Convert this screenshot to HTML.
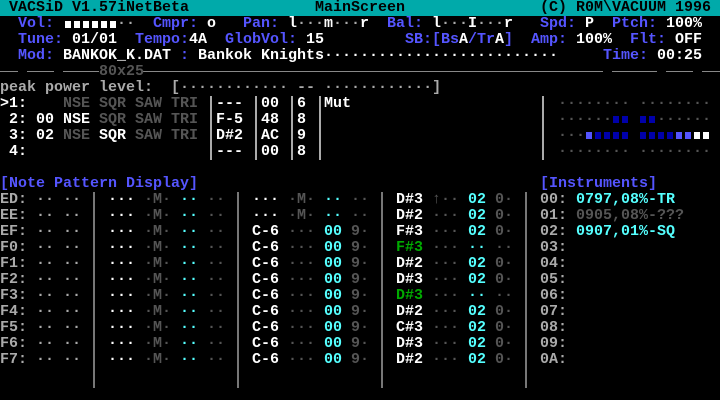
<!DOCTYPE html>
<html><head><meta charset="utf-8"><style>
html,body{margin:0;padding:0;background:#000;}
#s{position:relative;width:720px;height:400px;overflow:hidden;background:#000;font-family:"Liberation Mono",monospace;font-size:15px;font-weight:bold;line-height:16px;}
#s span{position:absolute;white-space:pre;height:16px;}
.B{color:#5555ff}.W{color:#fff}.G{color:#aaa}.D{color:#555}.C{color:#55ffff}.K{color:#000}.N{color:#00aa00}
.v{position:absolute;width:2px}
.h{position:absolute;height:1px;top:71px;background:#888}
.q{position:absolute;width:6px;height:7px}
</style></head><body><div id="s">
<div style="position:absolute;left:0;top:0;width:720px;height:16px;background:#00aaaa"></div>
<span class="K" style="left:9px;top:0">VACSiD V1.57iNetBeta</span>
<span class="K" style="left:315px;top:0">MainScreen</span>
<span class="K" style="left:540px;top:0">(C) R0M\VACUUM 1996</span>

<span class="B" style="left:18px;top:16px">Vol:</span>
<div class="q" style="left:65px;top:21px;background:#fff"></div><div class="q" style="left:74px;top:21px;background:#fff"></div><div class="q" style="left:83px;top:21px;background:#fff"></div><div class="q" style="left:92px;top:21px;background:#fff"></div><div class="q" style="left:101px;top:21px;background:#fff"></div><div class="q" style="left:110px;top:21px;background:#fff"></div>
<span class="G" style="left:117px;top:16px">··</span>
<span class="B" style="left:153px;top:16px">Cmpr:</span><span class="W" style="left:207px;top:16px">o</span>
<span class="B" style="left:243px;top:16px">Pan:</span><span class="W" style="left:288px;top:16px">l</span><span class="G" style="left:297px;top:16px">···</span><span class="W" style="left:324px;top:16px">m</span><span class="G" style="left:333px;top:16px">···</span><span class="W" style="left:360px;top:16px">r</span>
<span class="B" style="left:387px;top:16px">Bal:</span><span class="W" style="left:432px;top:16px">l</span><span class="G" style="left:441px;top:16px">···</span><span class="W" style="left:468px;top:16px">I</span><span class="G" style="left:477px;top:16px">···</span><span class="W" style="left:504px;top:16px">r</span>
<span class="B" style="left:540px;top:16px">Spd:</span><span class="W" style="left:585px;top:16px">P</span>
<span class="B" style="left:612px;top:16px">Ptch:</span><span class="W" style="left:666px;top:16px">100%</span>

<span class="B" style="left:18px;top:32px">Tune:</span><span class="W" style="left:72px;top:32px">01/01</span>
<span class="B" style="left:135px;top:32px">Tempo:</span><span class="W" style="left:189px;top:32px">4A</span>
<span class="B" style="left:225px;top:32px">GlobVol:</span><span class="W" style="left:306px;top:32px">15</span>
<span class="B" style="left:405px;top:32px">SB:[Bs</span><span class="W" style="left:459px;top:32px">A</span><span class="B" style="left:468px;top:32px">/Tr</span><span class="W" style="left:495px;top:32px">A</span><span class="B" style="left:504px;top:32px">]</span>
<span class="B" style="left:531px;top:32px">Amp:</span><span class="W" style="left:576px;top:32px">100%</span>
<span class="B" style="left:630px;top:32px">Flt:</span><span class="W" style="left:675px;top:32px">OFF</span>

<span class="B" style="left:18px;top:48px">Mod:</span><span class="W" style="left:63px;top:48px">BANKOK_K.DAT</span><span class="B" style="left:180px;top:48px">:</span><span class="W" style="left:198px;top:48px">Bankok Knights··························</span>
<span class="B" style="left:603px;top:48px">Time:</span><span class="W" style="left:657px;top:48px">00:25</span>

<div class="h" style="left:0;width:18px"></div><div class="h" style="left:27px;width:27px"></div><div class="h" style="left:63px;width:36px"></div><div class="h" style="left:143px;width:460px"></div><div class="h" style="left:612px;width:45px"></div><div class="h" style="left:666px;width:27px"></div><div class="h" style="left:702px;width:18px"></div>
<span class="D" style="left:99px;top:64px">80x25</span>

<span class="G" style="left:0;top:80px">peak power level:  [············ -- ············]</span>

<span class="W" style="left:0;top:96px">&gt;1:</span><span class="D" style="left:63px;top:96px">NSE SQR SAW TRI</span><span class="W" style="left:216px;top:96px">---</span><span class="W" style="left:261px;top:96px">00</span><span class="W" style="left:297px;top:96px">6</span><span class="W" style="left:324px;top:96px">Mut</span>
<span class="W" style="left:9px;top:112px">2: 00 NSE</span><span class="D" style="left:99px;top:112px">SQR SAW TRI</span><span class="W" style="left:216px;top:112px">F-5</span><span class="W" style="left:261px;top:112px">48</span><span class="W" style="left:297px;top:112px">8</span>
<span class="W" style="left:9px;top:128px">3: 02</span><span class="D" style="left:63px;top:128px">NSE</span><span class="W" style="left:99px;top:128px">SQR</span><span class="D" style="left:135px;top:128px">SAW TRI</span><span class="W" style="left:216px;top:128px">D#2</span><span class="W" style="left:261px;top:128px">AC</span><span class="W" style="left:297px;top:128px">9</span>
<span class="W" style="left:9px;top:144px">4:</span><span class="W" style="left:216px;top:144px">---</span><span class="W" style="left:261px;top:144px">00</span><span class="W" style="left:297px;top:144px">8</span>
<div class="v" style="left:210px;top:96px;height:64px;background:#aaa"></div>
<div class="v" style="left:255px;top:96px;height:64px;background:#aaa"></div>
<div class="v" style="left:291px;top:96px;height:64px;background:#aaa"></div>
<div class="v" style="left:319px;top:96px;height:64px;background:#aaa"></div>
<div class="v" style="left:542px;top:96px;height:64px;background:#aaa"></div>

<span class="D" style="left:558px;top:96px">········ ········</span>
<span class="D" style="left:558px;top:112px">········ ········</span>
<span class="D" style="left:558px;top:128px">········ ········</span>
<span class="D" style="left:558px;top:144px">········ ········</span>
<div style="position:absolute;left:610px;top:114px;width:20px;height:12px;background:#000"></div>
<div style="position:absolute;left:637px;top:114px;width:20px;height:12px;background:#000"></div>
<div style="position:absolute;left:583px;top:130px;width:47px;height:12px;background:#000"></div>
<div style="position:absolute;left:637px;top:130px;width:83px;height:12px;background:#000"></div>
<div class="q" style="left:613px;top:116px;background:#0000aa"></div><div class="q" style="left:622px;top:116px;background:#0000aa"></div><div class="q" style="left:640px;top:116px;background:#0000aa"></div><div class="q" style="left:649px;top:116px;background:#0000aa"></div>
<div class="q" style="left:586px;top:132px;background:#5555ff"></div><div class="q" style="left:595px;top:132px;background:#0000aa"></div><div class="q" style="left:604px;top:132px;background:#0000aa"></div><div class="q" style="left:613px;top:132px;background:#0000aa"></div><div class="q" style="left:622px;top:132px;background:#0000aa"></div>
<div class="q" style="left:640px;top:132px;background:#0000aa"></div><div class="q" style="left:649px;top:132px;background:#0000aa"></div><div class="q" style="left:658px;top:132px;background:#0000aa"></div><div class="q" style="left:667px;top:132px;background:#0000aa"></div><div class="q" style="left:676px;top:132px;background:#5555ff"></div><div class="q" style="left:685px;top:132px;background:#5555ff"></div><div class="q" style="left:694px;top:132px;background:#fff"></div><div class="q" style="left:703px;top:132px;background:#fff"></div>

<span class="B" style="left:0;top:176px">[Note Pattern Display]</span>
<span class="B" style="left:540px;top:176px">[Instruments]</span>

<div class="v" style="left:93px;top:192px;height:196px;background:#777"></div>
<div class="v" style="left:237px;top:192px;height:196px;background:#777"></div>
<div class="v" style="left:381px;top:192px;height:196px;background:#777"></div>
<div class="v" style="left:525px;top:192px;height:196px;background:#777"></div>

<!-- rows -->
<span class="G" style="left:0;top:192px">ED:</span><span class="G" style="left:36px;top:192px">·· ··</span><span class="W" style="left:108px;top:192px">···</span><span class="D" style="left:144px;top:192px">·M·</span><span class="C" style="left:180px;top:192px">··</span><span class="D" style="left:207px;top:192px">··</span><span class="W" style="left:252px;top:192px">···</span><span class="D" style="left:288px;top:192px">·M·</span><span class="C" style="left:324px;top:192px">··</span><span class="D" style="left:351px;top:192px">··</span><span class="W" style="left:396px;top:192px">D#3</span><span class="D" style="left:432px;top:192px">↑··</span><span class="C" style="left:468px;top:192px">02</span><span class="D" style="left:495px;top:192px">0·</span><span class="G" style="left:540px;top:192px">00:</span><span class="C" style="left:576px;top:192px">0797,08%-TR</span>
<span class="G" style="left:0;top:208px">EE:</span><span class="G" style="left:36px;top:208px">·· ··</span><span class="W" style="left:108px;top:208px">···</span><span class="D" style="left:144px;top:208px">·M·</span><span class="C" style="left:180px;top:208px">··</span><span class="D" style="left:207px;top:208px">··</span><span class="W" style="left:252px;top:208px">···</span><span class="D" style="left:288px;top:208px">·M·</span><span class="C" style="left:324px;top:208px">··</span><span class="D" style="left:351px;top:208px">··</span><span class="W" style="left:396px;top:208px">D#2</span><span class="D" style="left:432px;top:208px">···</span><span class="C" style="left:468px;top:208px">02</span><span class="D" style="left:495px;top:208px">0·</span><span class="G" style="left:540px;top:208px">01:</span><span class="D" style="left:576px;top:208px">0905,08%-???</span>
<span class="G" style="left:0;top:224px">EF:</span><span class="G" style="left:36px;top:224px">·· ··</span><span class="W" style="left:108px;top:224px">···</span><span class="D" style="left:144px;top:224px">·M·</span><span class="C" style="left:180px;top:224px">··</span><span class="D" style="left:207px;top:224px">··</span><span class="W" style="left:252px;top:224px">C-6</span><span class="D" style="left:288px;top:224px">···</span><span class="C" style="left:324px;top:224px">00</span><span class="D" style="left:351px;top:224px">9·</span><span class="W" style="left:396px;top:224px">F#3</span><span class="D" style="left:432px;top:224px">···</span><span class="C" style="left:468px;top:224px">02</span><span class="D" style="left:495px;top:224px">0·</span><span class="G" style="left:540px;top:224px">02:</span><span class="C" style="left:576px;top:224px">0907,01%-SQ</span>
<span class="G" style="left:0;top:240px">F0:</span><span class="G" style="left:36px;top:240px">·· ··</span><span class="W" style="left:108px;top:240px">···</span><span class="D" style="left:144px;top:240px">·M·</span><span class="C" style="left:180px;top:240px">··</span><span class="D" style="left:207px;top:240px">··</span><span class="W" style="left:252px;top:240px">C-6</span><span class="D" style="left:288px;top:240px">···</span><span class="C" style="left:324px;top:240px">00</span><span class="D" style="left:351px;top:240px">9·</span><span class="N" style="left:396px;top:240px">F#3</span><span class="D" style="left:432px;top:240px">···</span><span class="C" style="left:468px;top:240px">··</span><span class="D" style="left:495px;top:240px">··</span><span class="G" style="left:540px;top:240px">03:</span>
<span class="G" style="left:0;top:256px">F1:</span><span class="G" style="left:36px;top:256px">·· ··</span><span class="W" style="left:108px;top:256px">···</span><span class="D" style="left:144px;top:256px">·M·</span><span class="C" style="left:180px;top:256px">··</span><span class="D" style="left:207px;top:256px">··</span><span class="W" style="left:252px;top:256px">C-6</span><span class="D" style="left:288px;top:256px">···</span><span class="C" style="left:324px;top:256px">00</span><span class="D" style="left:351px;top:256px">9·</span><span class="W" style="left:396px;top:256px">D#2</span><span class="D" style="left:432px;top:256px">···</span><span class="C" style="left:468px;top:256px">02</span><span class="D" style="left:495px;top:256px">0·</span><span class="G" style="left:540px;top:256px">04:</span>
<span class="G" style="left:0;top:272px">F2:</span><span class="G" style="left:36px;top:272px">·· ··</span><span class="W" style="left:108px;top:272px">···</span><span class="D" style="left:144px;top:272px">·M·</span><span class="C" style="left:180px;top:272px">··</span><span class="D" style="left:207px;top:272px">··</span><span class="W" style="left:252px;top:272px">C-6</span><span class="D" style="left:288px;top:272px">···</span><span class="C" style="left:324px;top:272px">00</span><span class="D" style="left:351px;top:272px">9·</span><span class="W" style="left:396px;top:272px">D#3</span><span class="D" style="left:432px;top:272px">···</span><span class="C" style="left:468px;top:272px">02</span><span class="D" style="left:495px;top:272px">0·</span><span class="G" style="left:540px;top:272px">05:</span>
<span class="G" style="left:0;top:288px">F3:</span><span class="G" style="left:36px;top:288px">·· ··</span><span class="W" style="left:108px;top:288px">···</span><span class="D" style="left:144px;top:288px">·M·</span><span class="C" style="left:180px;top:288px">··</span><span class="D" style="left:207px;top:288px">··</span><span class="W" style="left:252px;top:288px">C-6</span><span class="D" style="left:288px;top:288px">···</span><span class="C" style="left:324px;top:288px">00</span><span class="D" style="left:351px;top:288px">9·</span><span class="N" style="left:396px;top:288px">D#3</span><span class="D" style="left:432px;top:288px">···</span><span class="C" style="left:468px;top:288px">··</span><span class="D" style="left:495px;top:288px">··</span><span class="G" style="left:540px;top:288px">06:</span>
<span class="G" style="left:0;top:304px">F4:</span><span class="G" style="left:36px;top:304px">·· ··</span><span class="W" style="left:108px;top:304px">···</span><span class="D" style="left:144px;top:304px">·M·</span><span class="C" style="left:180px;top:304px">··</span><span class="D" style="left:207px;top:304px">··</span><span class="W" style="left:252px;top:304px">C-6</span><span class="D" style="left:288px;top:304px">···</span><span class="C" style="left:324px;top:304px">00</span><span class="D" style="left:351px;top:304px">9·</span><span class="W" style="left:396px;top:304px">D#2</span><span class="D" style="left:432px;top:304px">···</span><span class="C" style="left:468px;top:304px">02</span><span class="D" style="left:495px;top:304px">0·</span><span class="G" style="left:540px;top:304px">07:</span>
<span class="G" style="left:0;top:320px">F5:</span><span class="G" style="left:36px;top:320px">·· ··</span><span class="W" style="left:108px;top:320px">···</span><span class="D" style="left:144px;top:320px">·M·</span><span class="C" style="left:180px;top:320px">··</span><span class="D" style="left:207px;top:320px">··</span><span class="W" style="left:252px;top:320px">C-6</span><span class="D" style="left:288px;top:320px">···</span><span class="C" style="left:324px;top:320px">00</span><span class="D" style="left:351px;top:320px">9·</span><span class="W" style="left:396px;top:320px">C#3</span><span class="D" style="left:432px;top:320px">···</span><span class="C" style="left:468px;top:320px">02</span><span class="D" style="left:495px;top:320px">0·</span><span class="G" style="left:540px;top:320px">08:</span>
<span class="G" style="left:0;top:336px">F6:</span><span class="G" style="left:36px;top:336px">·· ··</span><span class="W" style="left:108px;top:336px">···</span><span class="D" style="left:144px;top:336px">·M·</span><span class="C" style="left:180px;top:336px">··</span><span class="D" style="left:207px;top:336px">··</span><span class="W" style="left:252px;top:336px">C-6</span><span class="D" style="left:288px;top:336px">···</span><span class="C" style="left:324px;top:336px">00</span><span class="D" style="left:351px;top:336px">9·</span><span class="W" style="left:396px;top:336px">D#3</span><span class="D" style="left:432px;top:336px">···</span><span class="C" style="left:468px;top:336px">02</span><span class="D" style="left:495px;top:336px">0·</span><span class="G" style="left:540px;top:336px">09:</span>
<span class="G" style="left:0;top:352px">F7:</span><span class="G" style="left:36px;top:352px">·· ··</span><span class="W" style="left:108px;top:352px">···</span><span class="D" style="left:144px;top:352px">·M·</span><span class="C" style="left:180px;top:352px">··</span><span class="D" style="left:207px;top:352px">··</span><span class="W" style="left:252px;top:352px">C-6</span><span class="D" style="left:288px;top:352px">···</span><span class="C" style="left:324px;top:352px">00</span><span class="D" style="left:351px;top:352px">9·</span><span class="W" style="left:396px;top:352px">D#2</span><span class="D" style="left:432px;top:352px">···</span><span class="C" style="left:468px;top:352px">02</span><span class="D" style="left:495px;top:352px">0·</span><span class="G" style="left:540px;top:352px">0A:</span>
</div></body></html>
